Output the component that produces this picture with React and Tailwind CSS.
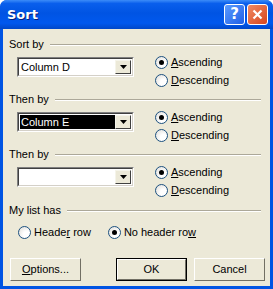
import React from 'react';

const font = { fontFamily: 'Tahoma, "Liberation Sans", Arial, sans-serif' };

const GroupLabel = ({ children }) => (
  <div className="flex h-[13px] items-center">
    <span className="leading-[13px]">{children}</span>
    <div className="ml-[6px] mr-[9px] flex-1 border-t border-b border-t-[#aca899] border-b-white" />
  </div>
);

const Radio = ({ checked, label, underline }) => {
  const idx = label.indexOf(underline);
  return (
    <div className="flex h-[18px] items-center">
      <span className="relative flex h-[13px] w-[13px] items-center justify-center rounded-full border border-[#1c5180] bg-[radial-gradient(circle_at_70%_70%,#ffffff_30%,#dcdad5_100%)]">
        {checked && <span className="h-[5px] w-[5px] rounded-full bg-[#000000]" />}
      </span>
      <span className="ml-[3px]">
        {label.slice(0, idx)}
        <span className="underline">{underline}</span>
        {label.slice(idx + underline.length)}
      </span>
    </div>
  );
};

const Combo = ({ value, selected }) => (
  <div className="flex h-[20px] w-[117px] border border-t-[#808080] border-l-[#808080] border-r-white border-b-white">
    <div className="flex flex-1 border border-t-[#404040] border-l-[#404040] border-r-[#d4d0c8] border-b-[#d4d0c8] bg-white p-[1px]">
      <div className={`flex flex-1 items-center pl-[1px] ${selected ? 'bg-black text-white' : ''}`}>{value}</div>
      <div className="flex w-[16px] items-center justify-center border border-t-[#f5f4ea] border-l-[#f5f4ea] border-r-[#404040] border-b-[#404040] bg-[#ece9d8]">
        <svg width="7" height="4" viewBox="0 0 7 4"><path d="M0 0h7L3.5 4z" fill="#000" /></svg>
      </div>
    </div>
  </div>
);

const SortSection = ({ title, value, selected }) => (
  <div className="flex flex-col">
    <GroupLabel>{title}</GroupLabel>
    <div className="mt-[2px] flex">
      <div className="ml-[8px] mt-[4px]">
        <Combo value={value} selected={selected} />
      </div>
      <div className="ml-[21px] flex flex-col">
        <Radio checked label="Ascending" underline="A" />
        <Radio label="Descending" underline="D" />
      </div>
    </div>
  </div>
);

const Button = ({ children, isDefault }) => (
  <div className={`flex h-[23px] w-[71px] ${isDefault ? 'border border-black' : ''}`}>
    <div className="flex flex-1 items-center justify-center border border-t-white border-l-white border-r-[#716f64] border-b-[#716f64] bg-[#ece9d8]">
      {children}
    </div>
  </div>
);

export default function App() {
  return (
    <div className="h-[289px] w-[273px] overflow-hidden text-[11px] text-black" style={font}>
      <div className="flex h-full flex-col rounded-t-[7px] bg-[#0054e3]">
        <div className="flex h-[29px] items-center rounded-t-[7px] bg-[linear-gradient(180deg,#3c8cf8_0%,#0a5fec_12%,#0054e3_45%,#0058ee_80%,#0047c8_100%)] pl-[7px] pr-[5px]">
          <span className="text-[13px] font-bold text-white [text-shadow:1px_1px_0_#0a1e7a]" style={{ fontFamily: '"DejaVu Sans", sans-serif' }}>
            Sort
          </span>
          <div className="flex-1" />
          <div className="flex h-[21px] w-[21px] items-center justify-center rounded-[3px] border border-white bg-[linear-gradient(135deg,#5b9bff,#1f5fe6)]">
            <span className="text-[15px] font-bold leading-none text-white" style={{ fontFamily: '"DejaVu Sans", sans-serif' }}>?</span>
          </div>
          <div className="ml-[2px] flex h-[21px] w-[21px] items-center justify-center rounded-[3px] border border-white bg-[linear-gradient(135deg,#f08a63,#d8461e)]">
            <svg width="11" height="11" viewBox="0 0 11 11">
              <path d="M1.5 1.5l8 8M9.5 1.5l-8 8" stroke="#fff" strokeWidth="2.2" />
            </svg>
          </div>
        </div>
        <div className="mx-[3px] mb-[3px] flex flex-1 flex-col bg-[#ece9d8] pl-[6px] pt-[9px]">
          <SortSection title="Sort by" value="Column D" />
          <div className="mt-[4px]">
            <SortSection title="Then by" value="Column E" selected />
          </div>
          <div className="mt-[4px]">
            <SortSection title="Then by" value="" />
          </div>
          <div className="mt-[5px]">
            <GroupLabel>My list has</GroupLabel>
          </div>
          <div className="ml-[9px] mt-[6px] flex">
            <Radio label="Header row" underline="r" />
            <div className="ml-[17px]">
              <Radio checked label="No header row" underline="w" />
            </div>
          </div>
          <div className="mt-[17px] flex">
            <div className="ml-[1px]">
              <Button><span><span className="underline">O</span>ptions...</span></Button>
            </div>
            <div className="ml-[35px]">
              <Button isDefault>OK</Button>
            </div>
            <div className="ml-[7px]">
              <Button>Cancel</Button>
            </div>
          </div>
        </div>
      </div>
    </div>
  );
}
